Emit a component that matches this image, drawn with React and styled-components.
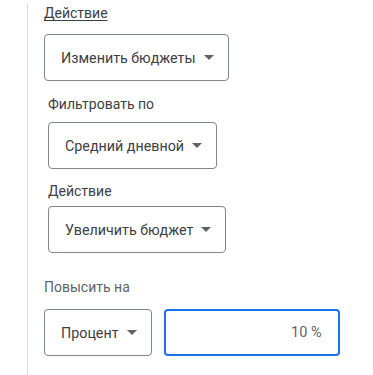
import React from "react";
import styled, { createGlobalStyle } from "styled-components";

const GlobalStyle = createGlobalStyle`
  body {
    margin: 0;
    background: #fff;
    font-family: Roboto, "Liberation Sans", Arial, sans-serif;
  }
`;

const Panel = styled.div`
  margin-left: 27px;
  border-left: 1px solid #dadce0;
  height: 373px;
  padding-left: 16px;
  box-sizing: border-box;
`;

const Label = styled.div`
  font-size: 14px;
  line-height: 20px;
  color: ${(p) => (p.$dark ? "#3c4043" : "#5f6368")};
  margin-top: ${(p) => p.$top}px;
  margin-left: ${(p) => p.$indent || 0}px;
  text-decoration: ${(p) => (p.$underline ? "underline" : "none")};
  text-underline-offset: 2px;
`;

const Select = styled.div`
  display: inline-flex;
  align-items: center;
  box-sizing: border-box;
  height: 47px;
  padding: 0 14px 0 16px;
  border: 1px solid #80868b;
  border-radius: 4px;
  font-size: 14.3px;
  color: #3c4043;
  gap: 8px;
`;

const Field = styled.div`
  margin-top: ${(p) => p.$top}px;
  margin-left: ${(p) => p.$indent || 0}px;
`;

const Row = styled.div`
  display: flex;
  gap: 12px;
  margin-top: ${(p) => p.$top}px;
`;

const Input = styled.div`
  box-sizing: border-box;
  width: 176px;
  height: 47px;
  border: 2px solid #1a73e8;
  border-radius: 4px;
  display: flex;
  align-items: center;
  justify-content: flex-end;
  padding-right: 16px;
  font-size: 14.5px;
  color: #5f6368;
`;

const Arrow = () => (
  <svg width="10" height="5" viewBox="0 0 10 5">
    <path d="M0 0 L10 0 L5 5 Z" fill="#5f6368" />
  </svg>
);

const Dropdown = ({ children }) => (
  <Select>
    <span>{children}</span>
    <Arrow />
  </Select>
);

export default function App() {
  return (
    <>
      <GlobalStyle />
      <Panel>
        <Label $dark $underline $top={3}>Действие</Label>
        <Field $top={11}>
          <Dropdown>Изменить бюджеты</Dropdown>
        </Field>
        <Label $dark $indent={4} $top={13}>Фильтровать по</Label>
        <Field $indent={4} $top={8}>
          <Dropdown>Средний дневной</Dropdown>
        </Field>
        <Label $dark $indent={4} $top={12}>Действие</Label>
        <Field $indent={4} $top={5}>
          <Dropdown>Увеличить бюджет</Dropdown>
        </Field>
        <Label $top={24}>Повысить на</Label>
        <Row $top={12}>
          <Dropdown>Процент</Dropdown>
          <Input>10 %</Input>
        </Row>
      </Panel>
    </>
  );
}
